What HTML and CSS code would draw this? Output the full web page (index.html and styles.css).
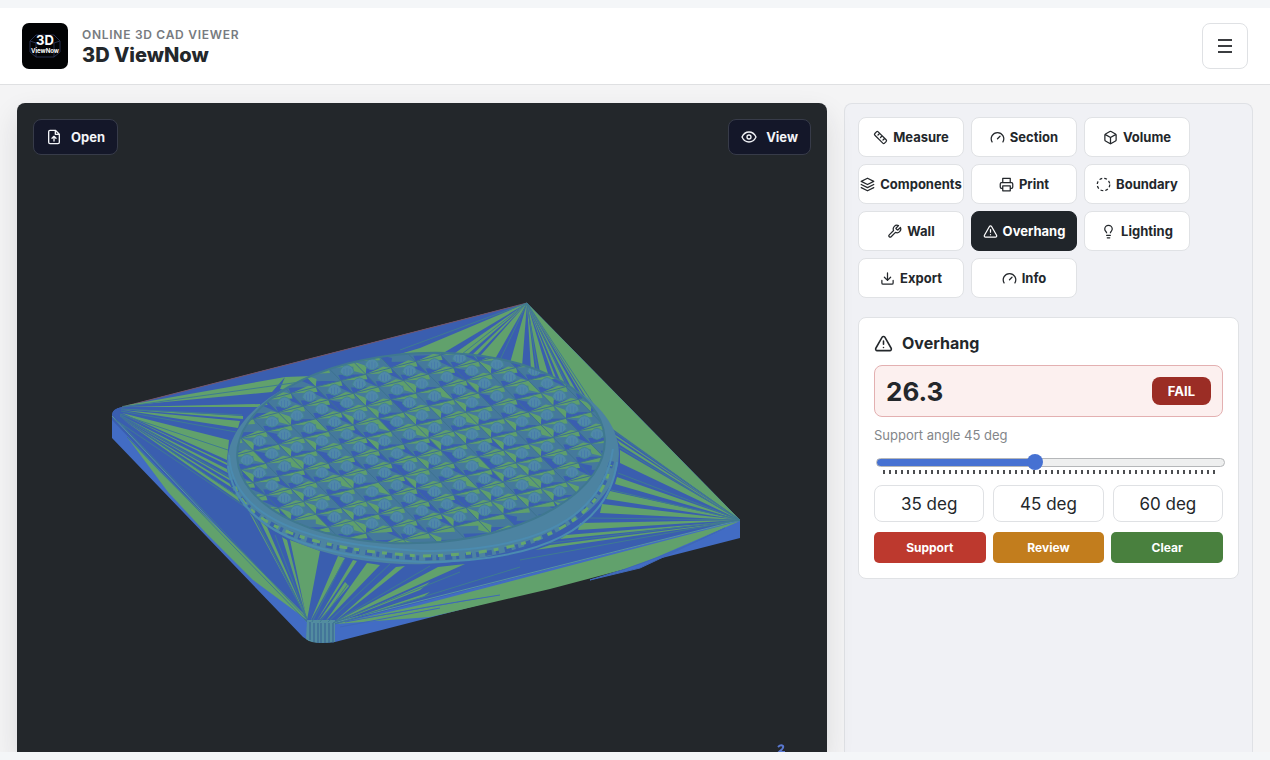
FILE: index.html
```html
<!DOCTYPE html>
<html lang="en">
<head>
  <meta charset="UTF-8" />
  <meta name="viewport" content="width=device-width, initial-scale=1.0"/>
  <title>3D ViewNow | Online 3D CAD Viewer</title>
  <link rel="stylesheet" href="styles.css">
</head>
<body>
  <div class="app">
    <header class="header">
      <div class="brand">
        <svg class="logo" viewBox="0 0 46 46" aria-hidden="true">
          <rect width="46" height="46" rx="7" fill="#020304"/>
          <path d="M14 12H32L38 18V29L32 34H14L8 29V18Z M8 18L14 20H32L38 18 M14 20V34 M32 20V34" fill="none" stroke="#27314f"/>
          <text x="23" y="22" class="logo-big">3D</text>
          <text x="23" y="30" class="logo-small">ViewNow</text>
        </svg>
        <div>
          <p class="eyebrow">ONLINE 3D CAD VIEWER</p>
          <h1>3D ViewNow</h1>
        </div>
      </div>
      <button class="menu-btn" aria-label="Menu">
        <svg class="icon-menu" viewBox="0 0 18 18"><path d="M2 3H16M2 9H16M2 15H16"/></svg>
      </button>
    </header>

    <main class="main">
      <section class="viewer">
        <svg class="model" id="model" viewBox="0 0 810 657" preserveAspectRatio="xMidYMin slice" aria-label="3D model">
          <defs>
            <clipPath id="disc"><ellipse cx="421" cy="448" rx="184" ry="95" transform="rotate(-3 421 448)"/></clipPath>
          </defs>
          <g transform="translate(-17 -103)">
            <!-- plate body -->
            <path d="M112 415Q112 409 122 407L527 303L740 520V538L335 642Q312 645 303 637L112 438Z" fill="#426cc4"/>
            <path d="M112 415Q112 409 122 407L527 303L740 520L335 624L307 622L112 420Z" fill="#3a5eaf"/>
            <path d="M122 407L527 303" stroke="#765567" fill="none"/>
            <path d="M112 416L307 622M333 623L740 520" stroke="#5794a0" fill="none"/>
            <path d="M307 620H335V642Q312 645 306 639Z" fill="#528ca0"/>
            <path d="M310 622V640M314 623V642M318 623V643M321 623V643M325 623V643M329 623V643M333 623V643" stroke="#355f91" fill="none"/>

            <!-- triangulated faces running into each corner -->
            <g fill="#61a16c">
              <path d="M527 303L740 520L607 425L587 399Z"/>
              <path d="M335 624L420 605L740 521L650 560L633 567L550 589L430 617Z"/>
              <path d="M127 437L160 472L233 543L303 613L307 620L253 580L206 533L168 492Z"/>
              <path d="M122 406L285 377L272 392ZM285 377L313 376L295 391L280 389ZM123 407L260 404V407ZM122 409L243 416V419ZM122 410L240 421L238 428ZM122 413L229 440L227 460ZM120 413L227 463V465ZM120 415L227 469L228 473ZM120 416L229 478L231 481ZM120 417L232 485L234 489ZM122 419L238 496L240 502Z"/>
              <path d="M307 619L249 512L253 517ZM307 619L260 521L267 527ZM307 619L282 537L287 540ZM307 620L290 540L320 551ZM310 622L338 556L345 558ZM316 622L353 560L357 561ZM318 622L345 582L349 586ZM325 622L367 563L380 565ZM333 623L396 567L405 566ZM333 623L438 567L465 564ZM338 622L430 582L420 590ZM338 623L430 592L423 597ZM335 624L420 596V598ZM318 622L340 590L336 600Z"/>
              <path d="M527 303L420 348L400 354L435 354L445 352ZM527 303L455 353L468 354ZM527 303L472 355L476 356ZM527 303L480 356L495 359ZM527 303L510 363L522 367ZM527 303L531 370L535 371ZM527 303L540 372L549 377ZM527 303L555 381L558 383ZM527 303L563 387L568 390ZM527 303L574 393L579 396ZM527 303L584 399L588 403Z"/>
              <path d="M740 520L611 432L616 437ZM740 520L617 440L620 445ZM740 520L620 450L620 463ZM740 520L617 477L615 484ZM740 520L610 491L606 499ZM740 520L602 504L600 513ZM740 520L580 523L578 530ZM740 521L566 535L560 539ZM740 521L550 545L535 550Z"/>
            </g>
            <path d="M345 622Q430 606 500 595M340 627L440 608M590 580Q660 560 725 528L640 568Z" fill="#426cc4" stroke="#3f68b8"/>
            <g fill="none" stroke="#3f7b91" stroke-width="1">
              <path d="M122 407L300 382M121 409L242 415M121 411L236 432M120 414L228 450M120 415L228 476M120 416L240 498M114 419L244 506M122 425L307 619M127 437L307 622"/>
              <path d="M307 619L250 508M307 619L275 535M312 622L344 560M320 622L348 584M328 622L390 564M333 623L430 566M333 623L460 572M335 624L520 567"/>
              <path d="M527 303L400 350M527 303L462 354M527 303L500 360M527 303L538 374M527 303L570 391M527 303L598 411"/>
              <path d="M740 520L612 430M740 520L619 447M740 520L618 473M740 520L611 490M740 520L590 518M740 520L550 543M740 520L520 560"/>
            </g>

            <!-- raised disc and its stepped rim -->
            <ellipse cx="423" cy="459" rx="196" ry="105" fill="#4c83a1" transform="rotate(-2 423 459)"/>
            <path d="M231 480Q255 548 420 558Q587 558 612 460" fill="none" stroke="#3a63a9" stroke-width="5" stroke-dasharray="7 4 3 6"/>
            <path d="M235 487Q258 546 420 556Q590 554 611 465" fill="none" stroke="#65a66d" stroke-width="3" stroke-dasharray="5 8 8 7"/>
            <path d="M228 466Q242 555 422 562Q604 561 617 462M229 455Q233 541 421 551Q598 551 613 449" fill="none" stroke="#4b8bb0" stroke-width="2"/>
            <g clip-path="url(#disc)">
              <rect x="225" y="340" width="400" height="220" fill="#45799c"/>
              <g id="lattice"></g>
            </g>
            <ellipse cx="421" cy="448" rx="184" ry="95" fill="none" stroke="#3f7890" stroke-width="2" transform="rotate(-3 421 448)"/>
            <path d="M778 747Q781 744 783 746Q784 748 780 751L779 752H785" class="axis"/>
          </g>
        </svg>
        <div class="viewer-bar">
          <button class="dark-btn">
            <svg class="icon" viewBox="0 0 24 24"><path d="M14 2H6a2 2 0 0 0-2 2v16a2 2 0 0 0 2 2h12a2 2 0 0 0 2-2V8ZM14 2v6h6M12 18v-7M9 14l3-3 3 3"/></svg>
            Open
          </button>
          <button class="dark-btn">
            <svg class="icon" viewBox="0 0 24 24"><path d="M1.500 12S5 4.500 12 4.500 22.500 12 22.500 12 19 19.500 12 19.500 1.500 12 1.500 12Z"/><circle cx="12" cy="12" r="3"/></svg>
            View
          </button>
        </div>
      </section>

      <aside class="panel">
        <nav class="tools">
          <button class="tool"><svg class="icon" viewBox="0 0 24 24"><path d="M3 5.500 5.500 3a2 2 0 0 1 2.800 0L21 15.700a2 2 0 0 1 0 2.800L18.500 21a2 2 0 0 1-2.800 0L3 8.300a2 2 0 0 1 0-2.800ZM8 8l2-2M12 12l2-2M16 16l2-2"/></svg>Measure</button>
          <button class="tool"><svg class="icon" viewBox="0 0 24 24"><path d="M12 14l4-4M3.300 19a10 10 0 1 1 17.400 0"/></svg>Section</button>
          <button class="tool"><svg class="icon" viewBox="0 0 24 24"><path d="M21 16V8a2 2 0 0 0-1-1.700l-7-4a2 2 0 0 0-2 0l-7 4A2 2 0 0 0 3 8v8a2 2 0 0 0 1 1.700l7 4a2 2 0 0 0 2 0l7-4a2 2 0 0 0 1-1.700ZM3.300 7 12 12l8.700-5M12 22V12"/></svg>Volume</button>
          <button class="tool"><svg class="icon" viewBox="0 0 24 24"><path d="M12 2 2 7l10 5 10-5ZM2 12l10 5 10-5M2 17l10 5 10-5"/></svg>Components</button>
          <button class="tool"><svg class="icon" viewBox="0 0 24 24"><path d="M6 18H4a2 2 0 0 1-2-2v-5a2 2 0 0 1 2-2h16a2 2 0 0 1 2 2v5a2 2 0 0 1-2 2h-2M6 9V2h12v7M6 14h12v8H6Z"/></svg>Print</button>
          <button class="tool"><svg class="icon" viewBox="0 0 24 24"><circle class="dashed" cx="12" cy="12" r="10" stroke-dasharray="4.500 3.354"/></svg>Boundary</button>
          <button class="tool"><svg class="icon" viewBox="0 0 24 24"><path d="M14.700 6.300a1 1 0 0 0 0 1.400l1.600 1.600a1 1 0 0 0 1.400 0l3.770-3.770a6 6 0 0 1-7.940 7.940l-6.910 6.910a2.120 2.120 0 0 1-3-3l6.910-6.910a6 6 0 0 1 7.940-7.940Z"/></svg>Wall</button>
          <button class="tool active"><svg class="icon" viewBox="0 0 24 24"><path d="M21.700 18l-8-14a2 2 0 0 0-3.400 0l-8 14A2 2 0 0 0 4 21h16a2 2 0 0 0 1.700-3ZM12 9v4M12 17v.1"/></svg>Overhang</button>
          <button class="tool"><svg class="icon" viewBox="0 0 24 24"><path d="M15 14c.2-1 .7-1.700 1.500-2.500A6 6 0 0 0 18 8 6 6 0 0 0 6 8c0 1 .2 2.200 1.500 3.500.7.700 1.300 1.500 1.500 2.500M9 18h6M10 22h4"/></svg>Lighting</button>
          <button class="tool"><svg class="icon" viewBox="0 0 24 24"><path d="M21 15v4a2 2 0 0 1-2 2H5a2 2 0 0 1-2-2v-4M7 10l5 5 5-5M12 15V3"/></svg>Export</button>
          <button class="tool"><svg class="icon" viewBox="0 0 24 24"><path d="M12 14l4-4M3.300 19a10 10 0 1 1 17.400 0"/></svg>Info</button>
        </nav>

        <section class="card">
          <h2><svg class="icon" viewBox="0 0 24 24"><path d="M21.700 18l-8-14a2 2 0 0 0-3.400 0l-8 14A2 2 0 0 0 4 21h16a2 2 0 0 0 1.700-3ZM12 9v4M12 17v.1"/></svg>Overhang</h2>
          <div class="result">
            <strong>26.3</strong>
            <span class="badge">FAIL</span>
          </div>
          <label class="angle-label" for="angle">Support angle <span id="angleValue">45</span> deg</label>
          <div class="slider">
            <input type="range" id="angle" min="20" max="75" value="45">
            <div class="ticks"></div>
          </div>
          <div class="presets">
            <button class="preset" data-angle="35">35 deg</button>
            <button class="preset" data-angle="45">45 deg</button>
            <button class="preset" data-angle="60">60 deg</button>
          </div>
          <div class="actions">
            <button class="action support">Support</button>
            <button class="action review">Review</button>
            <button class="action clear">Clear</button>
          </div>
        </section>
      </aside>
    </main>
  </div>
  <script src="script.js"></script>
</body>
</html>
```
FILE: styles.css
```css
* {
  box-sizing: border-box;
}

body {
  margin: 0;
  font-family: Inter, "Liberation Sans", sans-serif;
  color: #23272b;
  background: #f4f6f8;
}

button {
  font-family: inherit;
  color: inherit;
  cursor: pointer;
}

h1, h2, p {
  margin: 0;
}

.app {
  display: flex;
  flex-direction: column;
  height: 100vh;
  padding: 8px 0;
}

.header {
  display: flex;
  align-items: center;
  justify-content: space-between;
  height: 77px;
  flex-shrink: 0;
  padding: 0 22px;
  background: #fff;
  border-bottom: 1px solid #dfe0e2;
}

.brand {
  display: flex;
  align-items: center;
  gap: 14px;
}

.logo {
  width: 46px;
  height: 46px;
}

.logo text {
  fill: #fff;
  font-weight: 700;
  text-anchor: middle;
}

.logo .logo-big {
  font-size: 13px;
}

.logo .logo-small {
  font-size: 6px;
}

.eyebrow {
  padding-top: 1px;
  font-size: 12px;
  line-height: 16px;
  font-weight: 600;
  letter-spacing: 0.06em;
  color: #777b80;
}

h1 {
  font-size: 20px;
  line-height: 24px;
  font-weight: 800;
}

.menu-btn {
  display: flex;
  align-items: center;
  justify-content: center;
  width: 46px;
  height: 46px;
  padding: 0;
  background: #fff;
  border: 1px solid #dfe1e4;
  border-radius: 8px;
}

.icon-menu {
  width: 18px;
  height: 18px;
  fill: none;
  stroke: #3b3d40;
  stroke-width: 2;
}

.icon {
  width: 15px;
  height: 15px;
  flex-shrink: 0;
  fill: none;
  stroke: currentColor;
  stroke-width: 2;
  stroke-linecap: round;
  stroke-linejoin: round;
}

.icon .dashed {
  stroke-linecap: butt;
}

.main {
  display: grid;
  grid-template-columns: minmax(0, 1fr) 409px;
  gap: 17px;
  flex: 1;
  min-height: 0;
  padding: 18px 17px 0;
  overflow: hidden;
  background: #f4f4f5;
}

.viewer {
  position: relative;
  min-height: 0;
  background: #23272b;
  border-radius: 8px 8px 0 0;
  box-shadow: 0 12px 28px rgba(30, 35, 45, 0.12);
}

.model {
  display: block;
  width: 100%;
  height: 100%;
}

.axis {
  fill: none;
  stroke: #5a78d0;
  stroke-width: 2;
}

.viewer-bar {
  position: absolute;
  top: 16px;
  left: 16px;
  right: 16px;
  display: flex;
  justify-content: space-between;
}

.dark-btn {
  display: flex;
  align-items: center;
  gap: 9px;
  height: 36px;
  padding: 0 12px;
  font-size: 13px;
  font-weight: 700;
  color: #f3f4f8;
  background: #141729;
  border: 1px solid #373b49;
  border-radius: 8px;
}

.dark-btn .icon {
  width: 16px;
  height: 16px;
}

.panel {
  min-height: 0;
  padding: 13px;
  background: #f0f1f5;
  border: 1px solid #dfe1e5;
  border-bottom: none;
  border-radius: 8px 8px 0 0;
}

.tools {
  display: grid;
  grid-template-columns: repeat(auto-fill, 106px);
  gap: 7px;
}

.tool {
  display: flex;
  align-items: center;
  justify-content: center;
  gap: 5px;
  height: 40px;
  padding: 0;
  font-size: 13px;
  font-weight: 700;
  white-space: nowrap;
  background: #fff;
  border: 1px solid #e0e2e5;
  border-radius: 8px;
}

.tool.active {
  color: #fff;
  background: #20252a;
  border-color: #20252a;
}

.card {
  margin-top: 19px;
  padding: 15px;
  background: #fff;
  border: 1px solid #e0e2e5;
  border-radius: 8px;
}

h2 {
  display: flex;
  align-items: center;
  gap: 9px;
  font-size: 16px;
  line-height: 20px;
  font-weight: 700;
}

h2 .icon {
  width: 19px;
  height: 19px;
}

.result {
  display: flex;
  align-items: center;
  justify-content: space-between;
  height: 52px;
  margin-top: 12px;
  padding: 0 11px;
  background: #fcf0ef;
  border: 1px solid #e3b0b1;
  border-radius: 8px;
}

.result strong {
  font-size: 26px;
  font-weight: 700;
}

.badge {
  padding: 0 16px;
  font-size: 13px;
  line-height: 28px;
  font-weight: 700;
  color: #fff;
  background: #9b2d25;
  border-radius: 8px;
}

.angle-label {
  display: block;
  margin-top: 9px;
  font-size: 13px;
  line-height: 18px;
  color: #83868a;
}

.slider {
  margin: 10px -2px 11px 2px;
}

.slider input {
  display: block;
  width: 100%;
  height: 16px;
  margin: 0;
  appearance: none;
  background: none;
}

.slider input::-webkit-slider-runnable-track {
  height: 9px;
  border: 1px solid #b5b7b9;
  border-radius: 5px;
  background: linear-gradient(#4671d2, #4671d2) 0 0 / var(--fill, 46%) 100% no-repeat #eeefef;
}

.slider input::-webkit-slider-thumb {
  appearance: none;
  width: 16px;
  height: 16px;
  margin-top: -5px;
  border-radius: 50%;
  background: #4671d2;
}

.ticks {
  height: 4px;
  margin: 0 7px;
  background: repeating-linear-gradient(to right, #4b4d50 0 2px, transparent 2px 6px);
}

.presets,
.actions {
  display: grid;
  grid-template-columns: repeat(3, 1fr);
}

.presets {
  gap: 9px;
}

.actions {
  gap: 7px;
  margin-top: 10px;
}

.preset {
  height: 37px;
  padding: 0;
  font-size: 17px;
  background: #fff;
  border: 1px solid #dfe1e4;
  border-radius: 8px;
}

.action {
  height: 31px;
  padding: 0;
  font-size: 12px;
  font-weight: 700;
  color: #fff;
  border: none;
  border-radius: 5px;
}

.support {
  background: #bd392e;
}

.review {
  background: #c27d1d;
}

.clear {
  background: #49803e;
}
```
FILE: script.js
```javascript
const lattice = document.getElementById('lattice');
const angle = document.getElementById('angle');
const angleValue = document.getElementById('angleValue');

function addPath(d, fill, stroke) {
  const path = document.createElementNS('http://www.w3.org/2000/svg', 'path');
  path.setAttribute('d', d);
  path.setAttribute('fill', fill);
  if (stroke) path.setAttribute('stroke', stroke);
  lattice.appendChild(path);
}

// cell edges: a runs down the disc, c runs across it
const a = [12.5, 12.7];
const c = [25, -6.4];

function drawLattice() {
  let green = '';
  let blue = '';
  let edges = '';
  let domes = '';
  let ribs = '';

  for (let m = -16; m < 24; m++) {
    for (let n = -14; n < 18; n++) {
      const x = 434.5 + m * a[0] + n * c[0];
      const y = 460 + m * a[1] + n * c[1];
      if (x < 215 || x > 630 || y < 335 || y > 560) continue;

      const at = (u, v) => (x + u * a[0] + v * c[0]).toFixed(1) + ' ' + (y + u * a[1] + v * c[1]).toFixed(1);
      const kind = Math.abs(m * 7 + n * 11 + m * n) % 5;

      // slivers along the shallow edges
      blue += `M${at(.5, -.5)}L${at(.5, .5)}L${at(.1, -.4)}Z`;
      green += `M${at(-.5, -.5)}L${at(-.5, .5)}L${at(-.15, .4)}Z`;
      if (kind < 3) green += `M${at(.5, -.5)}L${at(.5, .5)}L${at(.3, .3)}Z`;

      // slivers along the steep edges, in a slightly different way per cell
      if (kind === 0 || kind === 3) green += `M${at(-.5, -.5)}L${at(.5, -.5)}L${at(0, -.22)}Z`;
      if (kind === 1) blue += `M${at(-.5, -.5)}L${at(.5, -.5)}L${at(-.1, -.15)}Z`;
      if (kind === 4) green += `M${at(-.5, .5)}L${at(.5, .5)}L${at(.1, .2)}Z`;
      if (kind === 2) blue += `M${at(-.5, .5)}L${at(.5, .5)}L${at(-.2, .2)}Z`;
      edges += `M${at(-.5, -.5)}L${at(-.5, .5)}M${at(-.5, -.5)}L${at(.5, -.5)}`;

      // inner points only carry a dome
      const dx = (x - 422) / 177;
      const dy = (y - 446 + (x - 422) * 0.064) / 90;
      if (dx * dx + dy * dy > 1) continue;
      domes += `M${x - 7} ${y + 1}Q${x - 6} ${y - 5} ${x} ${y - 6}Q${x + 6} ${y - 5} ${x + 7} ${y + 1}Q${x} ${y + 9} ${x - 7} ${y + 1}Z`;
      ribs += `M${x - 3} ${y - 2}V${y + 4}M${x} ${y - 3}V${y + 4}M${x + 3} ${y - 2}V${y + 4}`;
    }
  }

  addPath(blue, '#3a5eb0');
  addPath(green, '#5e9f6c');
  addPath(edges, 'none', '#3d7290');
  addPath(domes, '#4f88a8', '#458591');
  addPath(ribs, 'none', '#487cab');
}

function setAngle(value) {
  angle.value = value;
  angleValue.textContent = value;
  angle.style.setProperty('--fill', (value - 20) / 55 * 100 + '%');
}

angle.addEventListener('input', () => setAngle(angle.value));
document.querySelectorAll('.preset').forEach(button => {
  button.addEventListener('click', () => setAngle(button.dataset.angle));
});

drawLattice();
setAngle(45);
```
